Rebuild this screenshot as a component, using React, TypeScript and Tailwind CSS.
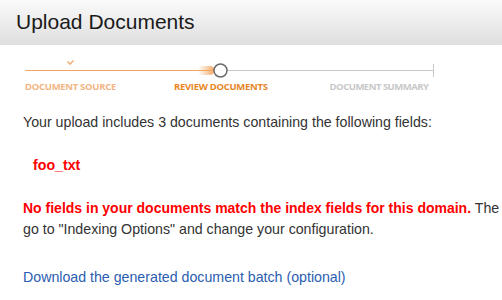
import React from 'react';

const font = { fontFamily: '"Liberation Sans", Arial, sans-serif' };

function Stepper() {
  return (
    <div className="relative h-[45px] w-[502px]">
      <svg width="502" height="45" className="absolute left-0 top-0">
        <defs>
          <linearGradient id="glow" x1="0" x2="1" y1="0" y2="0">
            <stop offset="0" stopColor="#f3a35c" stopOpacity="0" />
            <stop offset="1" stopColor="#f3a35c" stopOpacity="0.9" />
          </linearGradient>
        </defs>
        {/* check mark over step 1 */}
        <path d="M67.5 11.5 L70 14 L73.5 10.5" stroke="#f0b27a" strokeWidth="1.6" fill="none" />
        <line x1="25" y1="20.5" x2="214" y2="20.5" stroke="#f1a75f" strokeWidth="1" />
        <rect x="198" y="16" width="16" height="9" rx="4" fill="url(#glow)" />
        <line x1="227" y1="20.5" x2="433" y2="20.5" stroke="#c9c9c9" strokeWidth="1" />
        <line x1="433.5" y1="14" x2="433.5" y2="27" stroke="#c9c9c9" strokeWidth="1" />
        <circle cx="220.5" cy="20.5" r="6.5" fill="#fff" stroke="#6b6b6b" strokeWidth="1.5" />
      </svg>
      <div
        className="absolute left-0 top-[30px] flex w-full text-[9.5px] font-bold tracking-[-0.3px]"
        style={{ fontFamily: '"Open Sans", "Liberation Sans", sans-serif' }}
      >
        <span className="ml-[25px] text-[#f2b583]">DOCUMENT SOURCE</span>
        <span className="ml-[58px] text-[#e8861f]">REVIEW DOCUMENTS</span>
        <span className="ml-[62px] tracking-[-0.5px] text-[#c8c8c8]">DOCUMENT SUMMARY</span>
      </div>
    </div>
  );
}

export default function App() {
  return (
    <div className="h-[300px] w-[502px] overflow-hidden bg-white" style={font}>
      <div className="h-[45px] bg-gradient-to-b from-[#fafafa] to-[#dfdfdf] pl-[16px] pt-[9px] text-[21px] leading-[25px] text-[#1a1a1a]">
        Upload Documents
      </div>
      <div className="mt-[5px]">
        <Stepper />
      </div>
      <div className="pl-[23px] text-[14.2px] leading-[21px] text-[#333]">
        <p className="mt-[17px]">Your upload includes 3 documents containing the following fields:</p>
        <p className="mt-[22px] pl-[10px] font-bold text-[#ff0000]">foo_txt</p>
        <p className="mt-[22px] whitespace-nowrap">
          <span className="text-[14px] font-bold text-[#ff0000]">No fields in your documents match the index fields for this domain.</span>{' '}
          The current index fields will not be populated. To add fields,
          <br />
          go to "Indexing Options" and change your configuration.
        </p>
        <p className="mt-[27px]">
          <a className="text-[#2a5db0]" href="#">Download the generated document batch (optional)</a>
        </p>
      </div>
    </div>
  );
}
